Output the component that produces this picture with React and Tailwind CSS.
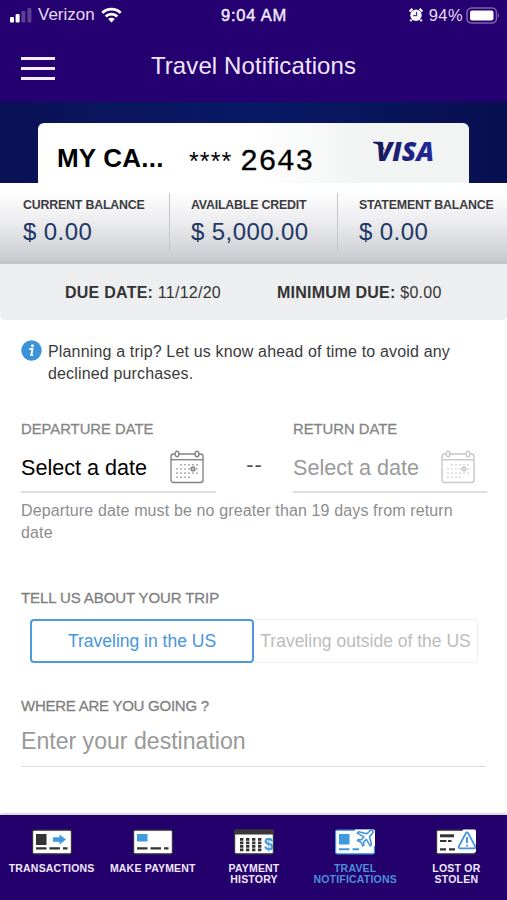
import React from "react";

function StatusBar() {
  return (
    <div className="grid h-[30px] grid-cols-3 items-center text-[#e6dcf5]">
      <div className="flex items-center pl-[9px]">
        <svg width="24" height="16" viewBox="0 0 24 16" fill="#fff">
          <rect x="1" y="10" width="4" height="5.5" rx="1" />
          <rect x="6.6" y="7" width="4" height="8.5" rx="1" />
          <rect x="12.4" y="4" width="4" height="11.5" rx="1" opacity=".25" />
          <rect x="18.4" y="1" width="4" height="14.5" rx="1" opacity=".25" />
        </svg>
        <span className="ml-[5px] text-[17px] leading-[20px]">Verizon</span>
        <svg className="ml-[6px]" width="21" height="16" viewBox="0 0 21 16" fill="none" stroke="#fff" strokeWidth="2.7">
          <path d="M1.3 5.9a13 13 0 0 1 18.4 0" />
          <path d="M4.7 9.5a8.2 8.2 0 0 1 11.6 0" />
          <path d="M10.5 15.4 7.2 12a4.7 4.7 0 0 1 6.6 0z" fill="#fff" stroke="none" />
        </svg>
      </div>
      <div className="pl-[1px] text-center text-[16.5px] leading-[20px] tracking-[0.8px] text-[#f3ecff] [-webkit-text-stroke:0.4px]">9:04 AM</div>
      <div className="flex items-center justify-end pr-[7px]">
        <svg width="14" height="14" viewBox="0 0 14 14">
          <circle cx="7" cy="7.3" r="5.7" fill="#fff" />
          <path d="M.6 3.6 3.4.8M13.4 3.6 10.6.8M2.6 11.6l-1.4 1.6M11.4 11.6l1.4 1.6" stroke="#fff" strokeWidth="2" />
          <path d="M7.6 3.7v4H4.2" fill="none" stroke="#4b3485" strokeWidth="1.2" />
        </svg>
        <span className="ml-[6px] text-[16.5px] leading-[20px] tracking-[0.4px]">94%</span>
        <svg className="ml-[3px]" width="34" height="17" viewBox="0 0 34 17">
          <rect x="1" y="1" width="29.5" height="15" rx="4.5" fill="none" stroke="#7d63a9" strokeWidth="1.5" />
          <rect x="4" y="3.4" width="23.5" height="10.2" rx="2" fill="#fff" />
          <path d="M32 6.2v4.6c1.6-.8 1.6-3.8 0-4.6z" fill="#7d63a9" />
        </svg>
      </div>
    </div>
  );
}

function NavBar() {
  return (
    <div className="grid h-[72px] grid-cols-[60px_1fr_60px] items-center">
      <div className="ml-[21px] mt-[4px] flex w-[34px] flex-col gap-[7px]">
        <span className="h-[3px] bg-[#f3edfb]" />
        <span className="h-[3px] bg-[#f3edfb]" />
        <span className="h-[3px] bg-[#f3edfb]" />
      </div>
      <h1 className="whitespace-nowrap text-center text-[24px] leading-[30px] tracking-[0.1px] text-[#efe6fb]">Travel Notifications</h1>
    </div>
  );
}

function CardBanner() {
  return (
    <div className="flex h-[81px] items-end bg-linear-to-r from-[#0a1155] via-[#071a66] to-[#080f4f] px-[38px]">
      <div className="flex h-[60px] w-[432px] items-center rounded-t-[6px] bg-linear-to-r from-white from-50% to-[#f2f4f4] to-75% pl-[19px]">
        <span className="w-[132px] whitespace-nowrap pt-[10px] text-[26px] font-bold leading-[30px] tracking-[0.2px] text-black">MY CA...</span>
        <span className="w-[51px] pt-[15px] text-[25px] leading-[30px] tracking-[1.1px] text-black">****</span>
        <span className="w-[133px] pt-[18px] font-['Liberation_Mono'] text-[30px] leading-[30px] tracking-[0.4px] text-black [-webkit-text-stroke:0.3px]">2643</span>
        <svg className="overflow-visible" width="64" height="28" viewBox="0 0 64 28">
          <defs>
            <linearGradient id="visa" x1="0" x2="1">
              <stop offset="0" stopColor="#171a5c" />
              <stop offset="1" stopColor="#20299c" />
            </linearGradient>
          </defs>
          <path d="M0 2.800h8l4 9C8.500 7.500 5 5 0 4z" fill="#171a5c" />
          <text x="3" y="21.600" fontFamily="Open Sans" fontSize="26.500" fontWeight="800" fontStyle="italic" textLength="58" lengthAdjust="spacingAndGlyphs" fill="url(#visa)">VISA</text>
        </svg>
      </div>
    </div>
  );
}

function Balance({ label, value }) {
  return (
    <div className="h-[58px] whitespace-nowrap border-l border-[#c3c5c8] pl-[21px] pt-[4px] first:border-l-0 first:pl-[23px]">
      <div className="text-[12.4px] font-bold leading-[17px] tracking-[-0.2px] text-[#3c3c40]">{label}</div>
      <div className="mt-[4px] text-[24px] leading-[28px] tracking-[0.4px] text-[#1d3865]">{value}</div>
    </div>
  );
}

function Balances() {
  return (
    <div className="grid h-[81px] grid-cols-[169px_168px_170px] border-b-[3px] border-[#c3c5c9] bg-linear-to-b from-white from-10% via-[#ececef] via-50% to-[#c8cacd] pt-[10px]">
      <Balance label="CURRENT BALANCE" value="$ 0.00" />
      <Balance label="AVAILABLE CREDIT" value="$ 5,000.00" />
      <Balance label="STATEMENT BALANCE" value="$ 0.00" />
    </div>
  );
}

function CalendarIcon({ className }) {
  const rows = [
    [11, 15, 19, 23, 27],
    [7, 11, 15, 19, 23, 27],
    [7, 11, 15, 19, 23, 27],
    [7, 11, 15, 19],
  ];
  return (
    <svg className={className} width="34" height="34" viewBox="0 0 34 34" fill="none" stroke="currentColor" strokeWidth="1.4">
      <rect x="1" y="4" width="32" height="28.500" rx="2.500" />
      <path d="M1 9.700h32" />
      <ellipse cx="7" cy="4" rx="1.900" ry="2.800" fill="#fff" />
      <ellipse cx="27" cy="4" rx="1.900" ry="2.800" fill="#fff" />
      {rows.map((row, r) =>
        row.map((x) => <rect key={`${r}-${x}`} x={x - 0.7} y={14 + r * 4.2} width="1.4" height="1.4" fill="currentColor" stroke="none" />)
      )}
      <circle cx="23" cy="18.900" r="1.900" />
    </svg>
  );
}

function DateField({ label, valueClass, iconClass }) {
  return (
    <div className="whitespace-nowrap">
      <div className="text-[14.8px] leading-[20px] text-[#858585] [-webkit-text-stroke:0.3px]">{label}</div>
      <div className="mt-[9px] flex h-[45px] items-start justify-between border-b-2 border-[#dedede] pr-[12px]">
        <span className={`pt-[6px] text-[21.6px] leading-[28px] ${valueClass}`}>Select a date</span>
        <CalendarIcon className={`mt-[2px] ${iconClass}`} />
      </div>
    </div>
  );
}

function TripForm() {
  return (
    <main className="flex h-[495px] flex-col bg-white px-[21px] pt-[20px]">
      <div className="flex items-start">
        <svg width="21" height="21" viewBox="0 0 21 21">
          <circle cx="10.500" cy="10.500" r="10.200" fill="#3b93dc" />
          <circle cx="11.400" cy="5.700" r="1.500" fill="#fff" />
          <path d="M8.300 9h3.200l-1.200 6h1.900" fill="none" stroke="#fff" strokeWidth="1.900" />
        </svg>
        <p className="ml-[6px] mt-px whitespace-nowrap text-[16px] leading-[21.5px] tracking-[0.16px] text-[#3b3b3b]">
          Planning a trip? Let us know ahead of time to avoid any
          <br />
          declined purchases.
        </p>
      </div>
      <div className="mt-[35px] grid grid-cols-[195px_77px_194px]">
        <DateField label="DEPARTURE DATE" valueClass="text-black" iconClass="text-[#858585]" />
        <div className="pt-[34px] text-center text-[22px] leading-[24px] tracking-[1px] text-[#555]">--</div>
        <DateField label="RETURN DATE" valueClass="text-[#9a9a9a]" iconClass="text-[#c8c8c8]" />
      </div>
      <p className="mt-[7px] whitespace-nowrap text-[16px] leading-[21.5px] tracking-[0.13px] text-[#8d8d8d]">
        Departure date must be no greater than 19 days from return
        <br />
        date
      </p>
      <h2 className="mt-[45px] text-[15px] leading-[20px] tracking-[-0.1px] text-[#7f7f7f] [-webkit-text-stroke:0.3px]">TELL US ABOUT YOUR TRIP</h2>
      <div className="ml-[9px] mt-[11px] flex h-[44px] whitespace-nowrap text-[17.5px]">
        <button className="w-[224px] rounded-[4px] border-2 border-[#4d9ade] text-[#4696dc]">Traveling in the US</button>
        <button className="w-[224px] rounded-r-[4px] border border-l-0 border-[#efefef] text-[#bcbcbc]">Traveling outside of the US</button>
      </div>
      <h2 className="mt-[33px] text-[15px] leading-[20px] tracking-[-0.25px] text-[#7f7f7f] [-webkit-text-stroke:0.3px]">WHERE ARE YOU GOING ?</h2>
      <div className="mt-[7px] h-[44px] border-b border-[#dcdcdc] pt-[4px] text-[23.1px] leading-[28px] text-[#999]">Enter your destination</div>
    </main>
  );
}

function CardIcon({ children, outline = "#38383c" }) {
  return (
    <svg width="42" height="26" viewBox="0 0 42 26">
      <rect x="1.600" y="1.200" width="38.800" height="23.600" rx="1.500" fill="#fff" stroke={outline} strokeWidth="1.200" />
      {children}
    </svg>
  );
}

function TransactionsIcon() {
  return (
    <CardIcon>
      <rect x="5" y="5" width="10.500" height="11" fill="#333" />
      <path d="M22 8.300h6.500V5.500l6.500 5-6.500 5v-2.800h-6.500z" fill="#3f9be0" />
      <path d="M5 19.300h10.500M18.500 19.300h10.500M32 19.300h4.500" stroke="#333" strokeWidth="2.300" />
    </CardIcon>
  );
}

function PaymentIcon() {
  return (
    <CardIcon>
      <rect x="5" y="5" width="10.500" height="7.500" fill="#3f9be0" />
      <path d="M5 19.300h10.500M18.500 19.300h10.500M32 19.300h4.500" stroke="#333" strokeWidth="2.300" />
    </CardIcon>
  );
}

function HistoryIcon() {
  return (
    <CardIcon>
      <path d="M1 5.500V2.500Q1 .6 3 .6h36q2 0 2 1.900v3z" fill="#38383c" />
      {[8.7, 14.7, 20.7, 26.7].map((x) => (
        <path key={x} d={`M${x} 9v13.500`} stroke="#333" strokeWidth="3.400" strokeDasharray="2.700 .8" />
      ))}
      <text x="35.700" y="20.800" textAnchor="middle" fontFamily="Liberation Sans" fontWeight="700" fontSize="16.500" fill="#3f9be0">$</text>
    </CardIcon>
  );
}

function TravelIcon() {
  return (
    <CardIcon outline="#3f9be0">
      <rect x="5" y="5" width="10.500" height="10.500" fill="#3f9be0" />
      <path d="M5 20.300h10.500M18.500 20.300h6.500" stroke="#3f9be0" strokeWidth="1.900" />
      <path d="M21 .6h18.500q1.500 0 1.500 1.500V17H21z" fill="#fff" />
      <path
        d="M38.800 1.800c-1.100-.9-2.600-.3-3.600.7l-2.300 2.300-8.300-2-1.300 1.400 6.600 3.700-2.800 3-2.700-.5-1 1.100 3.600 1.800 1.800 3.600 1.100-1-.5-2.700 3-2.800 3.700 6.600 1.400-1.300-2-8.300 2.300-2.300c1-1 1.800-2.300 1-3.300z"
        fill="#fff"
        stroke="#3f93dc"
        strokeWidth="1.500"
        strokeLinejoin="round"
      />
    </CardIcon>
  );
}

function LostIcon() {
  return (
    <CardIcon>
      <path d="M5 6.800h14" stroke="#333" strokeWidth="3" />
      <path d="M5 12h6.500M13 12h3.500M5 20.300h6M14 20.300h6" stroke="#333" strokeWidth="2.200" />
      <path d="M23 23V19L28 .6h11.500q1.500 0 1.500 1.500V23z" fill="#fff" />
      <path d="M30.800 4.300Q32 2.500 33.200 4.300L40.200 17.300Q40.800 19.300 39 19.300H25Q23.200 19.300 23.800 17.300z" fill="#fff" stroke="#3f93dc" strokeWidth="1.700" />
      <path d="M32 8v6M32 15.700v1.700" stroke="#3f93dc" strokeWidth="1.900" />
    </CardIcon>
  );
}

function Tab({ icon, lines, active }) {
  return (
    <div className={`flex flex-col items-center whitespace-nowrap text-center text-[10.5px] font-bold leading-[11px] tracking-[0.2px] ${active ? "text-[#4a8fdc]" : "text-[#efe8fa]"}`}>
      {icon}
      <span className="mt-[8px]">
        {lines.map((line) => (
          <span key={line} className="block">{line}</span>
        ))}
      </span>
    </div>
  );
}

function TabBar() {
  return (
    <nav className="grid h-[85px] grid-cols-5 bg-[#24006c] pl-[1px] pt-[14px] shadow-[0_-1px_3px_rgba(60,60,70,0.35)]">
      <Tab icon={<TransactionsIcon />} lines={["TRANSACTIONS"]} />
      <Tab icon={<PaymentIcon />} lines={["MAKE PAYMENT"]} />
      <Tab icon={<HistoryIcon />} lines={["PAYMENT", "HISTORY"]} />
      <Tab icon={<TravelIcon />} lines={["TRAVEL", "NOTIFICATIONS"]} active />
      <Tab icon={<LostIcon />} lines={["LOST OR", "STOLEN"]} />
    </nav>
  );
}

export default function App() {
  return (
    <div className="h-[900px] w-[507px] overflow-hidden bg-white font-['Liberation_Sans',Arial,sans-serif]">
      <header className="bg-[#250070]">
        <StatusBar />
        <NavBar />
      </header>
      <CardBanner />
      <Balances />
      <div className="flex h-[56px] whitespace-nowrap rounded-b-[5px] bg-[#edeef0] pl-[65px] text-[16px] leading-[57px] tracking-[0.25px] text-[#333]">
        <div className="w-[212px]"><b>DUE DATE:</b> 11/12/20</div>
        <div><b>MINIMUM DUE:</b> $0.00</div>
      </div>
      <TripForm />
      <TabBar />
    </div>
  );
}
